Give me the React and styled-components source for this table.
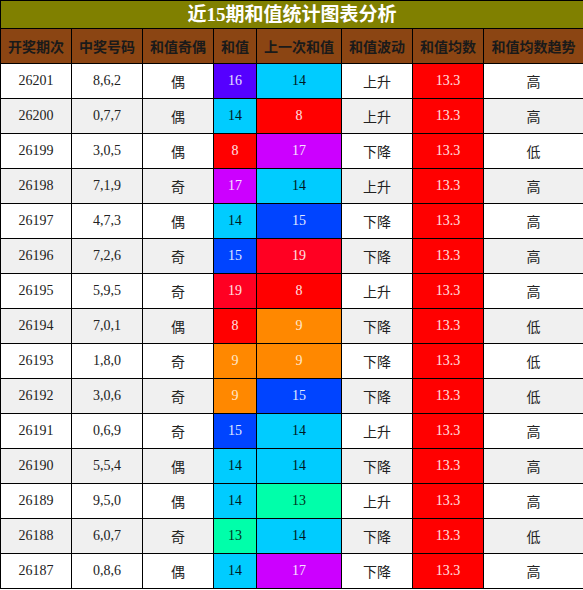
import React from "react";
import styled, { createGlobalStyle } from "styled-components";

const Global = createGlobalStyle`
  html, body { margin: 0; padding: 0; background: #fff; }
  body { font-family: "Liberation Serif", "Noto Sans CJK SC", serif; }
`;

const Table = styled.table`
  width: 583px;
  border-collapse: collapse;
  table-layout: fixed;
  font-family: "Liberation Serif", "Noto Sans CJK SC", serif;
`;

const TitleCell = styled.th`
  background: #808000;
  color: #fff;
  font-size: 19px;
  font-weight: bold;
  height: 27px;
  padding: 0;
  border: 1px solid #000;
  text-align: center;
  line-height: 27px;
`;

const HeadCell = styled.th`
  background: #8b4513;
  color: #1a1a1a;
  font-size: 14px;
  font-weight: bold;
  height: 34px;
  padding: 0;
  border: 1px solid #000;
  text-align: center;
  white-space: nowrap;
  font-family: "Noto Sans CJK SC", sans-serif;
`;

const Row = styled.tr`
  background: ${(p) => (p.$alt ? "#f0f0f0" : "#ffffff")};
`;

const Cell = styled.td`
  height: 34px;
  padding: 0;
  border: 1px solid #000;
  text-align: center;
  font-size: 14px;
  color: ${(p) => p.$fg || "#222"};
  background: ${(p) => p.$bg || "transparent"};
  font-family: ${(p) =>
    p.$cjk ? '"Noto Sans CJK SC", sans-serif' : '"Liberation Serif", serif'};
`;

const sumColors = {
  8: ["#ff0000", "#ffe0e0"],
  9: ["#ff8800", "#ffe8cc"],
  13: ["#00ffaa", "#003322"],
  14: ["#00ccff", "#001a22"],
  15: ["#0044ff", "#e0e8ff"],
  16: ["#5500ff", "#e8e0ff"],
  17: ["#cc00ff", "#f8e0ff"],
  19: ["#ff0022", "#ffe0e4"],
};

const rows = [
  ["26201", "8,6,2", "偶", 16, 14, "上升", "高"],
  ["26200", "0,7,7", "偶", 14, 8, "上升", "高"],
  ["26199", "3,0,5", "偶", 8, 17, "下降", "低"],
  ["26198", "7,1,9", "奇", 17, 14, "上升", "高"],
  ["26197", "4,7,3", "偶", 14, 15, "下降", "高"],
  ["26196", "7,2,6", "奇", 15, 19, "下降", "高"],
  ["26195", "5,9,5", "奇", 19, 8, "上升", "高"],
  ["26194", "7,0,1", "偶", 8, 9, "下降", "低"],
  ["26193", "1,8,0", "奇", 9, 9, "下降", "低"],
  ["26192", "3,0,6", "奇", 9, 15, "下降", "低"],
  ["26191", "0,6,9", "奇", 15, 14, "上升", "高"],
  ["26190", "5,5,4", "偶", 14, 14, "下降", "高"],
  ["26189", "9,5,0", "偶", 14, 13, "上升", "高"],
  ["26188", "6,0,7", "奇", 13, 14, "下降", "低"],
  ["26187", "0,8,6", "偶", 14, 17, "下降", "高"],
];

const widths = [71, 71, 71, 43, 85, 71, 71, 100];
const heads = ["开奖期次", "中奖号码", "和值奇偶", "和值", "上一次和值", "和值波动", "和值均数", "和值均数趋势"];

export default function App() {
  return (
    <>
      <Global />
      <Table>
        <colgroup>
          {widths.map((w, i) => (
            <col key={i} style={{ width: w }} />
          ))}
        </colgroup>
        <thead>
          <tr>
            <TitleCell colSpan={8}>近15期和值统计图表分析</TitleCell>
          </tr>
          <tr>
            {heads.map((h) => (
              <HeadCell key={h}>{h}</HeadCell>
            ))}
          </tr>
        </thead>
        <tbody>
          {rows.map((r, i) => {
            const [bg1, fg1] = sumColors[r[3]];
            const [bg2, fg2] = sumColors[r[4]];
            return (
              <Row key={r[0]} $alt={i % 2 === 1}>
                <Cell>{r[0]}</Cell>
                <Cell>{r[1]}</Cell>
                <Cell $cjk>{r[2]}</Cell>
                <Cell $bg={bg1} $fg={fg1}>{r[3]}</Cell>
                <Cell $bg={bg2} $fg={fg2}>{r[4]}</Cell>
                <Cell $cjk>{r[5]}</Cell>
                <Cell $bg="#ff0000" $fg="#ffe0e0">13.3</Cell>
                <Cell $cjk>{r[6]}</Cell>
              </Row>
            );
          })}
        </tbody>
      </Table>
    </>
  );
}
